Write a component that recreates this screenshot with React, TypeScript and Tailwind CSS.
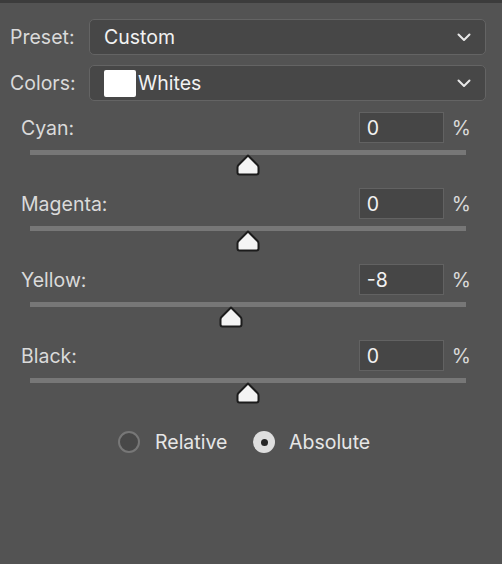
import React from "react"

const font = { fontFamily: "Inter, 'Noto Sans', sans-serif" }

function Chevron() {
  return (
    <svg width="14" height="9" viewBox="0 0 14 9" fill="none">
      <path d="M1.5 1.5 L7 7 L12.5 1.5" stroke="#e8e8e8" strokeWidth="2" strokeLinecap="round" strokeLinejoin="round" />
    </svg>
  )
}

function Thumb() {
  return (
    <svg width="24" height="22" viewBox="0 0 24 22">
      <path
        d="M12 1.5 L21.5 11 Q22.5 12 22.5 13.5 L22.5 18.5 Q22.5 20.5 20.5 20.5 L3.5 20.5 Q1.5 20.5 1.5 18.5 L1.5 13.5 Q1.5 12 2.5 11 Z"
        fill="#f4f4f4"
        stroke="#1c1c1c"
        strokeWidth="2"
        strokeLinejoin="round"
      />
    </svg>
  )
}

function Dropdown({ label, value, swatch }: { label: string; value: string; swatch?: boolean }) {
  return (
    <div className="flex items-center h-[36px]">
      <div className="w-[89px] pl-[10px] pt-[2px] text-[19.5px] text-[#dadada]">{label}</div>
      <div className="flex items-center w-[397px] h-full rounded-[5px] border border-[#646464] bg-[#474747] pr-[14px]">
        {swatch ? (
          <div className="flex items-center pl-[14px] flex-1">
            <div className="w-[32px] h-[27px] bg-white rounded-[2px]" />
            <span className="ml-[2px] pt-[2px] text-[19.5px] text-[#f2f2f2]">{value}</span>
          </div>
        ) : (
          <span className="pl-[14px] pt-[2px] flex-1 text-[19.5px] text-[#f2f2f2]">{value}</span>
        )}
        <Chevron />
      </div>
    </div>
  )
}

function Slider({ label, value }: { label: string; value: number }) {
  const left = 218 + (value / 100) * 218 - 12
  return (
    <div className="h-[76px]">
      <div className="flex items-center h-[31px] ml-[21px] w-[450px]">
        <div className="flex-1 pt-[2px] text-[19.5px] text-[#dadada]">{label}</div>
        <div className="w-[85px] h-full border border-[#626262] bg-[#464646] pl-[7px] pt-[2px] flex items-center text-[19.5px] text-[#f2f2f2]">
          {value}
        </div>
        <div className="ml-[8px] pt-[2px] text-[19.5px] text-[#dadada]">%</div>
      </div>
      <div className="relative ml-[30px] w-[436px] h-[5px] mt-[7px] bg-[#777777]">
        <div className="absolute top-[4px]" style={{ left }}>
          <Thumb />
        </div>
      </div>
    </div>
  )
}

export default function App() {
  return (
    <div className="w-[502px] h-[564px] bg-[#535353] overflow-hidden" style={font}>
      <div className="h-[3px] bg-[#3c3c3c]" />
      <div className="pt-[16px] flex flex-col gap-[10px]">
        <Dropdown label="Preset:" value="Custom" />
        <Dropdown label="Colors:" value="Whites" swatch />
      </div>
      <div className="mt-[11px]">
        <Slider label="Cyan:" value={0} />
        <Slider label="Magenta:" value={0} />
        <Slider label="Yellow:" value={-8} />
        <Slider label="Black:" value={0} />
      </div>
      <div className="flex items-center h-[22px] mt-[15px] pl-[118px] text-[19.5px] text-[#e6e6e6]">
        <div className="w-[22px] h-[22px] rounded-full border-2 border-[#777777] bg-[#484848]" />
        <span className="ml-[15px] w-[98px] pt-[2px]">Relative</span>
        <div className="w-[22px] h-[22px] rounded-full bg-[#dedede] flex items-center justify-center">
          <div className="w-[7px] h-[7px] rounded-full bg-[#262626]" />
        </div>
        <span className="ml-[14px] pt-[2px]">Absolute</span>
      </div>
    </div>
  )
}
